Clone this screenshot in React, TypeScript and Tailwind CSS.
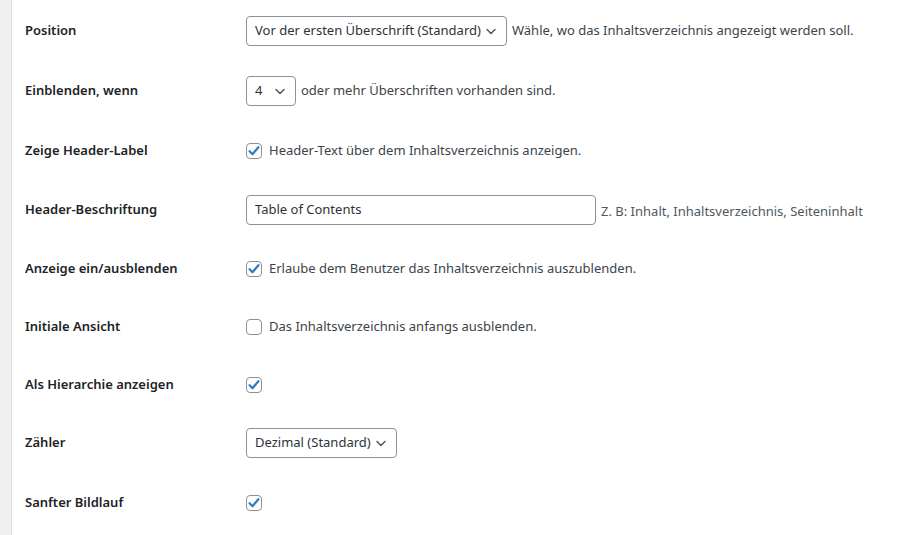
import React from "react";

const font = { fontFamily: '"Segoe UI", "Noto Sans", "Liberation Sans", sans-serif' };

function Chevron() {
  return (
    <svg width="16" height="16" viewBox="0 0 16 16" className="shrink-0">
      <path d="M4 6.5l4 4 4-4" fill="none" stroke="#50575e" strokeWidth="1.5" strokeLinecap="round" strokeLinejoin="round" />
    </svg>
  );
}

function Select({ value, width }: { value: string; width: string }) {
  return (
    <div className={`flex h-[30px] ${width} items-center justify-between rounded-[4px] border border-[#8c8f94] bg-white pl-2 pr-[7px] text-[13px] text-[#2c3338]`}>
      <span className="whitespace-nowrap">{value}</span>
      <Chevron />
    </div>
  );
}

function Checkbox({ checked }: { checked: boolean }) {
  return (
    <div className="flex h-4 w-4 shrink-0 items-center justify-center rounded-[4px] border border-[#8c8f94] bg-white">
      {checked && (
        <svg width="14" height="14" viewBox="0 0 14 14">
          <path d="M2.6 7.2l2.9 3 5.9-7" fill="none" stroke="#2f7bc2" strokeWidth="2.2" strokeLinecap="round" strokeLinejoin="round" />
        </svg>
      )}
    </div>
  );
}

function Row({ label, height, children }: { label: string; height: string; children: React.ReactNode }) {
  return (
    <div className={`flex ${height} items-center`}>
      <div className="w-[221px] shrink-0 text-[13px] font-semibold text-[#1d2327]">{label}</div>
      <div className="flex items-center text-[13px] text-[#3c434a]">{children}</div>
    </div>
  );
}

export default function App() {
  return (
    <div className="flex min-h-[535px] bg-white" style={font}>
      <div className="w-[12px] shrink-0 border-r border-[#dcdcde] bg-[#f0f0f1]" />
      <div className="flex-1 pl-[13px]">
        <Row label="Position" height="h-[61px]">
          <Select value="Vor der ersten Überschrift (Standard)" width="w-[261px]" />
          <span className="ml-[5px] whitespace-nowrap">Wähle, wo das Inhaltsverzeichnis angezeigt werden soll.</span>
        </Row>
        <Row label="Einblenden, wenn" height="h-[59px]">
          <Select value="4" width="w-[50px]" />
          <span className="ml-[5px] whitespace-nowrap">oder mehr Überschriften vorhanden sind.</span>
        </Row>
        <Row label="Zeige Header-Label" height="h-[62px]">
          <Checkbox checked />
          <span className="ml-[7px] whitespace-nowrap">Header-Text über dem Inhaltsverzeichnis anzeigen.</span>
        </Row>
        <Row label="Header-Beschriftung" height="h-[56px]">
          <div className="flex h-[30px] w-[350px] items-center rounded-[4px] border border-[#8c8f94] bg-white px-2 text-[13px] text-[#2c3338]">
            Table of Contents
          </div>
          <span className="ml-[5px] mt-[4px] whitespace-nowrap text-[#50575e]">Z. B: Inhalt, Inhaltsverzeichnis, Seiteninhalt</span>
        </Row>
        <Row label="Anzeige ein/ausblenden" height="h-[61px]">
          <Checkbox checked />
          <span className="ml-[7px] whitespace-nowrap">Erlaube dem Benutzer das Inhaltsverzeichnis auszublenden.</span>
        </Row>
        <Row label="Initiale Ansicht" height="h-[56px]">
          <Checkbox checked={false} />
          <span className="ml-[7px] whitespace-nowrap">Das Inhaltsverzeichnis anfangs ausblenden.</span>
        </Row>
        <Row label="Als Hierarchie anzeigen" height="h-[59px]">
          <Checkbox checked />
        </Row>
        <Row label="Zähler" height="h-[58px]">
          <Select value="Dezimal (Standard)" width="w-[151px]" />
        </Row>
        <Row label="Sanfter Bildlauf" height="h-[62px]">
          <Checkbox checked />
        </Row>
      </div>
    </div>
  );
}
